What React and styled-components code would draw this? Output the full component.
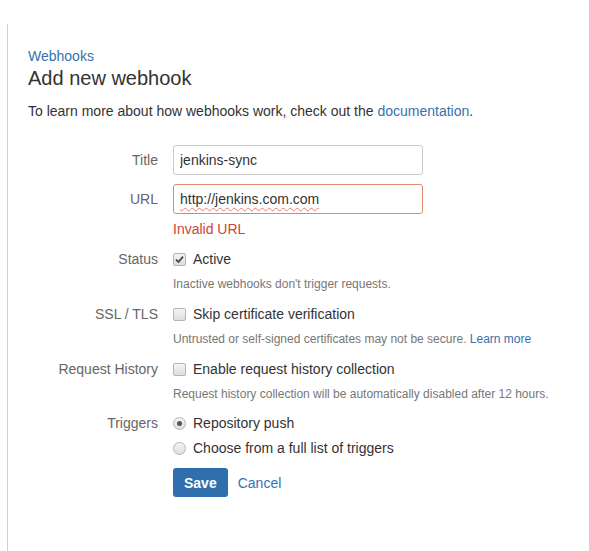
import styled, { createGlobalStyle } from "styled-components";

const GlobalStyle = createGlobalStyle`
  html, body {
    margin: 0;
    padding: 0;
    background: #fff;
  }
  body {
    font-family: "Liberation Sans", Helvetica, Arial, sans-serif;
    font-size: 14px;
    color: #333;
  }
`;

const Page = styled.div`
  margin: 24px 0 0 7px;
  border-left: 1px solid #cfcfcf;
  min-height: calc(100vh - 24px);
  padding: 22px 0 0 20px;
  box-sizing: border-box;
`;

const Link = styled.a`
  color: #3572b0;
  text-decoration: none;
  font-size: ${(p) => p.size || "inherit"};
  cursor: pointer;
`;

const Crumb = styled.div`
  line-height: 20px;
`;

const Heading = styled.h1`
  margin: 0;
  font-size: 20px;
  font-weight: normal;
  line-height: 24px;
  color: #333;
`;

const Intro = styled.p`
  margin: 11px 0 0;
  line-height: 20px;
`;

const Form = styled.form`
  margin-top: 24px;
`;

const Group = styled.div`
  display: grid;
  grid-template-columns: 130px 250px;
  column-gap: 15px;
  margin-top: ${(p) => p.gap ?? 0}px;
`;

const Label = styled.label`
  text-align: right;
  color: #666;
  line-height: ${(p) => (p.tall ? "30px" : "20px")};
  white-space: nowrap;
`;

const Controls = styled.div`
  display: flex;
  flex-direction: column;
  min-width: 0;
`;

const Field = styled.div`
  position: relative;
  width: 250px;
  height: 30px;
`;

const Input = styled.input`
  box-sizing: border-box;
  width: 250px;
  height: 30px;
  padding: 0 6px;
  border: 1px solid ${(p) => (p.invalid ? "#e4896f" : "#ccc")};
  border-radius: 3px;
  font-family: inherit;
  font-size: 14px;
  color: #333;
  outline: none;
`;

const Squiggle = styled.span`
  position: absolute;
  left: 7px;
  top: 0;
  line-height: 30px;
  font-size: 14px;
  color: transparent;
  pointer-events: none;
  white-space: nowrap;
  text-decoration: underline wavy #e87b6b;
  text-decoration-thickness: 1px;
  text-underline-offset: 3px;
`;

const Error = styled.div`
  margin-top: 5px;
  color: #d04437;
  line-height: 20px;
`;

const Option = styled.label`
  display: flex;
  align-items: center;
  gap: 7px;
  line-height: 20px;
  white-space: nowrap;
  margin-top: ${(p) => p.gap ?? 0}px;
`;

const Box = styled.span`
  box-sizing: border-box;
  width: 13px;
  height: 13px;
  flex: none;
  border: 1px solid #b4b4b4;
  border-radius: ${(p) => (p.round ? "50%" : "2px")};
  background: linear-gradient(#f4f4f4, #dedede);
  display: flex;
  align-items: center;
  justify-content: center;
`;

const Dot = styled.span`
  width: 5px;
  height: 5px;
  border-radius: 50%;
  background: #555;
`;

const Help = styled.div`
  margin-top: 7px;
  font-size: 12px;
  line-height: 17px;
  color: #777;
  white-space: nowrap;
`;

const Actions = styled.div`
  display: flex;
  align-items: center;
  gap: 10px;
  margin-top: 10px;
`;

const SaveButton = styled.button`
  height: 29px;
  padding: 0 11px;
  border: none;
  border-radius: 3px;
  background: #2f6fae;
  color: #fff;
  font-family: inherit;
  font-size: 14px;
  font-weight: bold;
  cursor: pointer;
`;

function Checkbox({ checked }) {
  return (
    <Box>
      {checked && (
        <svg width="9" height="9" viewBox="0 0 9 9">
          <path d="M1 4.6 L3.5 7 L8 1.6" fill="none" stroke="#444" strokeWidth="1.8" />
        </svg>
      )}
    </Box>
  );
}

function Radio({ checked }) {
  return <Box round>{checked && <Dot />}</Box>;
}

export default function App() {
  const url = "http://jenkins.com.com";
  return (
    <>
      <GlobalStyle />
      <Page>
        <Crumb>
          <Link>Webhooks</Link>
        </Crumb>
        <Heading>Add new webhook</Heading>
        <Intro>
          To learn more about how webhooks work, check out the{" "}
          <Link>documentation</Link>.
        </Intro>
        <Form onSubmit={(e) => e.preventDefault()}>
          <Group>
            <Label tall>Title</Label>
            <Controls>
              <Input defaultValue="jenkins-sync" spellCheck={false} />
            </Controls>
          </Group>
          <Group gap={9}>
            <Label tall>URL</Label>
            <Controls>
              <Field>
                <Input invalid defaultValue={url} spellCheck={false} />
                <Squiggle aria-hidden="true">{url}</Squiggle>
              </Field>
              <Error>Invalid URL</Error>
            </Controls>
          </Group>
          <Group gap={10}>
            <Label>Status</Label>
            <Controls>
              <Option>
                <Checkbox checked />
                Active
              </Option>
              <Help>Inactive webhooks don't trigger requests.</Help>
            </Controls>
          </Group>
          <Group gap={11}>
            <Label>SSL / TLS</Label>
            <Controls>
              <Option>
                <Checkbox />
                Skip certificate verification
              </Option>
              <Help>
                Untrusted or self-signed certificates may not be secure.{" "}
                <Link size="12px">Learn more</Link>
              </Help>
            </Controls>
          </Group>
          <Group gap={11}>
            <Label>Request History</Label>
            <Controls>
              <Option>
                <Checkbox />
                Enable request history collection
              </Option>
              <Help>
                Request history collection will be automatically disabled after 12 hours.
              </Help>
            </Controls>
          </Group>
          <Group gap={10}>
            <Label>Triggers</Label>
            <Controls>
              <Option>
                <Radio checked />
                Repository push
              </Option>
              <Option gap={5}>
                <Radio />
                Choose from a full list of triggers
              </Option>
              <Actions>
                <SaveButton type="submit">Save</SaveButton>
                <Link>Cancel</Link>
              </Actions>
            </Controls>
          </Group>
        </Form>
      </Page>
    </>
  );
}
